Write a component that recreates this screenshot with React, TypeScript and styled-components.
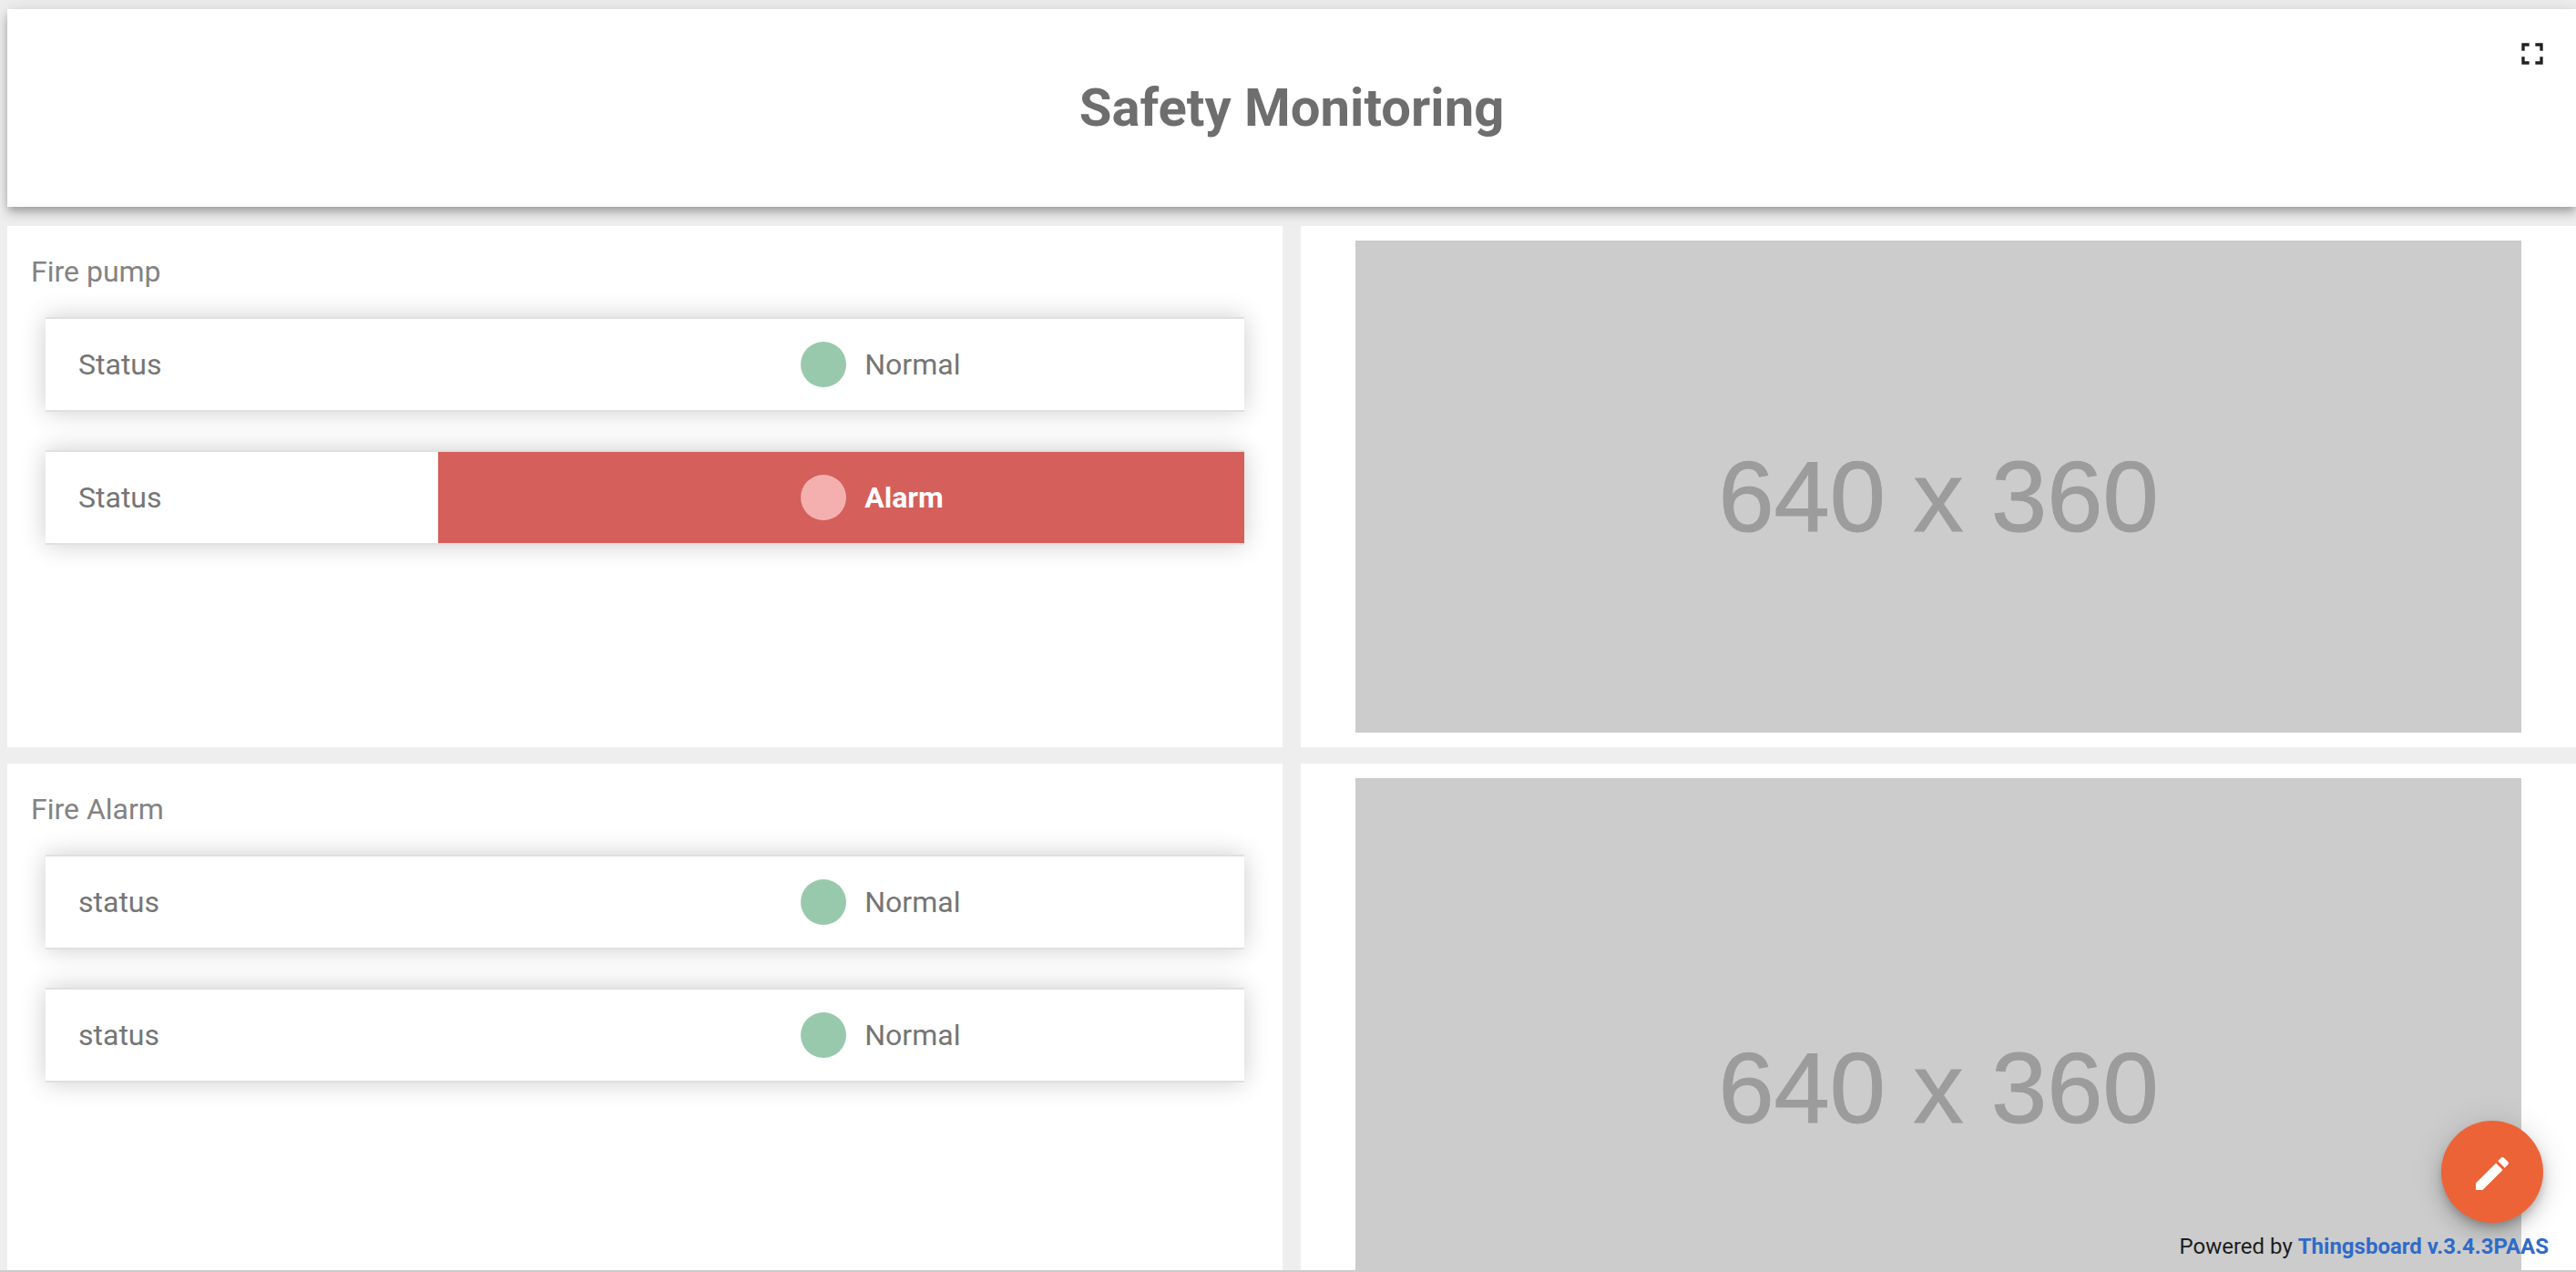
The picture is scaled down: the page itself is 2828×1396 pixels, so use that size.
import React from "react";
import styled, { createGlobalStyle } from "styled-components";

const GlobalStyle = createGlobalStyle`
  * { box-sizing: border-box; }
  html, body { margin: 0; background: #eeeeee; }
  body { font-family: Roboto, "Noto Sans", sans-serif; font-size: 32px; color: #757575; }
`;

const Dashboard = styled.div`
  position: relative;
  display: flex;
  flex-direction: column;
  height: 100vh;
  padding: 10px 0 0 8px;
  overflow: hidden;
  border-bottom: 2px solid #cccccc;
`;

const Header = styled.header`
  position: relative;
  display: flex;
  flex-shrink: 0;
  justify-content: center;
  padding: 76px 0 77px;
  background: #ffffff;
  box-shadow: 0 4px 8px -2px rgba(0, 0, 0, 0.2), 0 8px 10px rgba(0, 0, 0, 0.14),
    0 2px 20px rgba(0, 0, 0, 0.12);
`;

const Title = styled.h1`
  margin: 0;
  font-size: 58px;
  font-weight: 700;
  line-height: 64px;
  color: #6e6e6e;
`;

const FullscreenButton = styled.button`
  position: absolute;
  top: 29px;
  right: 28px;
  display: flex;
  padding: 0;
  border: 0;
  background: none;
  color: #212121;
`;

const Widgets = styled.main`
  position: relative;
  display: grid;
  grid-template-columns: 1fr 1fr;
  grid-template-rows: 572px 690px;
  gap: 18px 20px;
  flex: 1;
  min-height: 0;
  margin-top: 21px;
`;

const StatusPanel = styled.section`
  padding: 30px 42px 0;
  background: #ffffff;
`;

const PanelTitle = styled.h2`
  margin: 0 -16px 30px;
  font-size: 32px;
  font-weight: 400;
  line-height: 40px;
  color: #838383;
`;

const StatusList = styled.ul`
  display: flex;
  flex-direction: column;
  gap: 42px;
  margin: 0;
  padding: 0;
  list-style: none;
`;

const StatusRow = styled.li`
  display: grid;
  grid-template-columns: 431fr 885fr;
  height: 104px;
  border: solid #e0e0e0;
  border-width: 2px 0;
  background: #ffffff;
  box-shadow: 0 0 26px rgba(0, 0, 0, 0.2);
`;

const StatusName = styled.span`
  display: flex;
  align-items: center;
  padding-left: 36px;
`;

const StatusValue = styled.span<{ $alarm: boolean }>`
  display: flex;
  align-items: center;
  gap: 20px;
  padding-left: 45%;
  background: ${(p) => (p.$alarm ? "#d45f5b" : "transparent")};
  color: ${(p) => (p.$alarm ? "#ffffff" : "inherit")};
  font-weight: ${(p) => (p.$alarm ? 700 : 400)};
`;

const Lamp = styled.i<{ $alarm: boolean }>`
  width: 50px;
  height: 50px;
  border-radius: 50%;
  background: ${(p) => (p.$alarm ? "#f4b0af" : "#98c9ad")};
`;

const ImagePanel = styled.section`
  display: flex;
  padding: 16px 60px;
  background: #ffffff;
`;

const Placeholder = styled.div`
  display: flex;
  flex: 1;
  align-items: center;
  justify-content: center;
  padding-top: 22px;
  background: #cccccc;
  color: #9c9c9c;
  font-family: "Liberation Sans", Arial, sans-serif;
  font-size: 110px;
  line-height: 128px;
  -webkit-text-stroke: 1px #9c9c9c;
`;

const EditButton = styled.button`
  position: absolute;
  right: 36px;
  bottom: 52px;
  display: flex;
  align-items: center;
  justify-content: center;
  width: 112px;
  height: 112px;
  padding: 4px 0 0;
  border: 0;
  border-radius: 50%;
  background: #ec6337;
  color: #ffffff;
  box-shadow: 0 6px 10px -2px rgba(0, 0, 0, 0.2), 0 12px 20px rgba(0, 0, 0, 0.14),
    0 2px 36px rgba(0, 0, 0, 0.12);
`;

const PoweredBy = styled.footer`
  position: absolute;
  right: 30px;
  bottom: 10px;
  font-size: 24px;
  line-height: 32px;
  color: #1c1c1c;
`;

const VendorLink = styled.a`
  color: #2f6bc8;
  font-weight: 700;
  text-decoration: none;
`;

type Reading = { name: string; value: string; alarm?: boolean };

const panels: { title: string; readings: Reading[] }[] = [
  {
    title: "Fire pump",
    readings: [
      { name: "Status", value: "Normal" },
      { name: "Status", value: "Alarm", alarm: true },
    ],
  },
  {
    title: "Fire Alarm",
    readings: [
      { name: "status", value: "Normal" },
      { name: "status", value: "Normal" },
    ],
  },
];

export default function App() {
  return (
    <Dashboard>
      <GlobalStyle />
      <Header>
        <Title>Safety Monitoring</Title>
        <FullscreenButton type="button" aria-label="Fullscreen">
          <svg width="40" height="40" viewBox="0 0 24 24" fill="currentColor">
            <path d="M7 14H5v5h5v-2H7v-3zm-2-4h2V7h3V5H5v5zm12 7h-3v2h5v-5h-2v3zM14 5v2h3v3h2V5h-5z" />
          </svg>
        </FullscreenButton>
      </Header>
      <Widgets>
        {panels.map((panel) => (
          <React.Fragment key={panel.title}>
            <StatusPanel>
              <PanelTitle>{panel.title}</PanelTitle>
              <StatusList>
                {panel.readings.map((reading, i) => (
                  <StatusRow key={i}>
                    <StatusName>{reading.name}</StatusName>
                    <StatusValue $alarm={!!reading.alarm}>
                      <Lamp $alarm={!!reading.alarm} />
                      {reading.value}
                    </StatusValue>
                  </StatusRow>
                ))}
              </StatusList>
            </StatusPanel>
            <ImagePanel>
              <Placeholder>640 x 360</Placeholder>
            </ImagePanel>
          </React.Fragment>
        ))}
      </Widgets>
      <EditButton type="button" aria-label="Edit dashboard">
        <svg width="48" height="48" viewBox="0 0 24 24" fill="currentColor">
          <path d="M3 17.25V21h3.75L17.81 9.94l-3.75-3.75L3 17.25zM20.71 7.04c.39-.39.39-1.02 0-1.41l-2.34-2.34c-.39-.39-1.02-.39-1.41 0l-1.83 1.83 3.75 3.75 1.83-1.83z" />
        </svg>
      </EditButton>
      <PoweredBy>
        Powered by <VendorLink href="#thingsboard">Thingsboard v.3.4.3PAAS</VendorLink>
      </PoweredBy>
    </Dashboard>
  );
}
